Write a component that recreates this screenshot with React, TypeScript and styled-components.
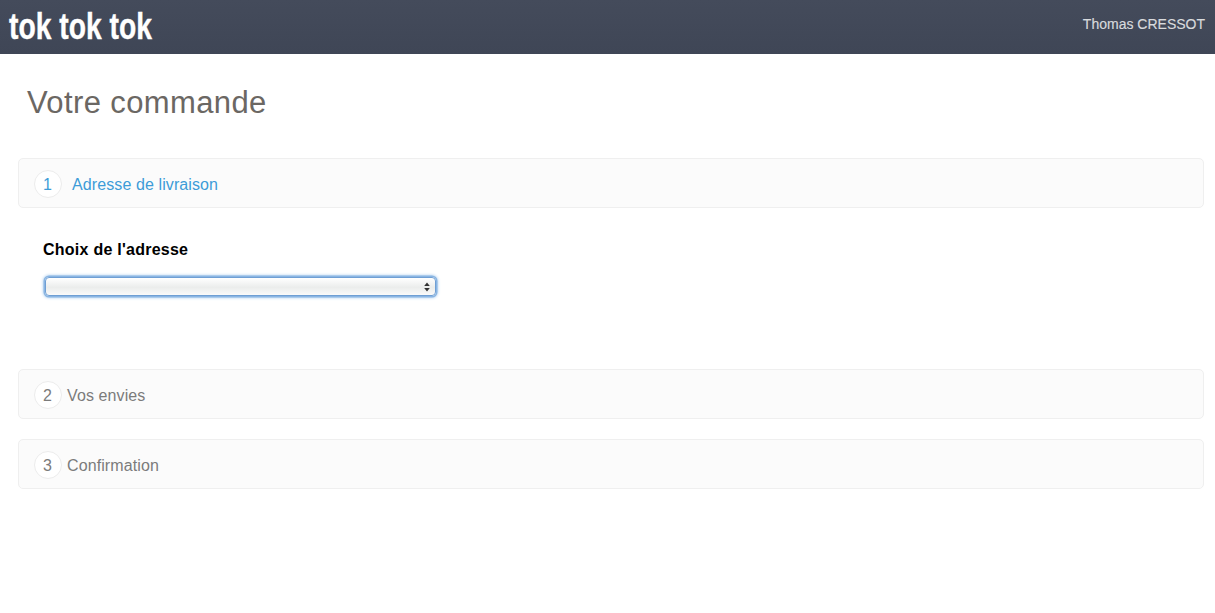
import React from "react";
import styled, { createGlobalStyle } from "styled-components";

const GlobalStyle = createGlobalStyle`
  html, body {
    margin: 0;
    padding: 0;
    background: #fff;
    font-family: "Liberation Sans", Arial, sans-serif;
  }
`;

const TopBar = styled.header`
  display: flex;
  justify-content: space-between;
  align-items: center;
  height: 54px;
  padding: 0 10px 0 9px;
  background: linear-gradient(to bottom, #444b5b, #3f4656);
`;

const Logo = styled.div`
  font-family: "Liberation Sans", sans-serif;
  font-weight: 700;
  font-size: 36px;
  line-height: 46px;
  height: 46px;
  color: #fff;
  transform: scaleX(0.785);
  transform-origin: left center;
  -webkit-text-stroke: 0.4px #fff;
`;

const UserName = styled.div`
  font-size: 14px;
  color: #d8dadd;
  margin-bottom: 6px;
  -webkit-text-stroke: 0.15px #d8dadd;
`;

const Content = styled.main`
  padding: 0 11px 0 18px;
`;

const Title = styled.h1`
  margin: 0;
  padding: 31px 0 0 9px;
  height: 73px;
  font-size: 31px;
  line-height: 36px;
  letter-spacing: 0.38px;
  font-weight: 400;
  color: #6b6763;
  box-sizing: content-box;
`;

const Step = styled.section`
  display: flex;
  align-items: center;
  box-sizing: border-box;
  height: 50px;
  padding: 2px 0 0 15px;
  background: #fbfbfb;
  border: 1px solid #efefef;
  border-radius: 5px;
  & + & {
    margin-top: 20px;
  }
`;

const StepNumber = styled.span<{ $active?: boolean }>`
  display: flex;
  align-items: center;
  justify-content: center;
  box-sizing: border-box;
  width: 28px;
  height: 28px;
  padding: 1px 1px 0 0;
  border-radius: 50%;
  border: 1px solid #ececec;
  background: #fff;
  font-size: 16px;
  color: ${(p) => (p.$active ? "#3d9cd8" : "#7b7b7b")};
`;

const StepLabel = styled.span<{ $active?: boolean }>`
  font-size: 16px;
  letter-spacing: 0.1px;
  padding-top: 1px;
  margin-left: ${(p) => (p.$active ? "10px" : "5px")};
  color: ${(p) => (p.$active ? "#3d9cd8" : "#7b7b7b")};
`;

const StepBody = styled.div`
  height: 161px;
  padding: 33px 0 0 25px;
  box-sizing: border-box;
`;

const FieldLabel = styled.label`
  display: block;
  font-size: 16px;
  line-height: 17px;
  font-weight: 700;
  letter-spacing: 0.25px;
  color: #000;
  margin-bottom: 19px;
`;

const SelectBox = styled.div`
  display: flex;
  align-items: center;
  justify-content: flex-end;
  box-sizing: border-box;
  width: 391px;
  height: 19px;
  margin-left: 2px;
  padding-right: 5px;
  border-radius: 4px;
  border: 1px solid #6f9fd4;
  background: linear-gradient(to bottom, #ffffff, #ebedec 55%, #fafafa);
  box-shadow: 0 0 0 1.5px #8ab5e3, 0 0 3px 2px #b3d2f0;
`;

const steps = [
  { n: 2, label: "Vos envies" },
  { n: 3, label: "Confirmation" },
];

const App = () => {
  return (
    <>
      <GlobalStyle />
      <TopBar>
        <Logo>tok tok tok</Logo>
        <UserName>Thomas CRESSOT</UserName>
      </TopBar>
      <Content>
        <Title>Votre commande</Title>
        <Step>
          <StepNumber $active>1</StepNumber>
          <StepLabel $active>Adresse de livraison</StepLabel>
        </Step>
        <StepBody>
          <FieldLabel>Choix de l'adresse</FieldLabel>
          <SelectBox>
            <svg width="6" height="10" viewBox="0 0 6 10">
              <path d="M3 0.5 L5.8 4 H0.2 Z M3 9.5 L0.2 6 H5.8 Z" fill="#333" />
            </svg>
          </SelectBox>
        </StepBody>
        {steps.map((s) => (
          <Step key={s.n}>
            <StepNumber>{s.n}</StepNumber>
            <StepLabel>{s.label}</StepLabel>
          </Step>
        ))}
      </Content>
    </>
  );
};

export default App;
